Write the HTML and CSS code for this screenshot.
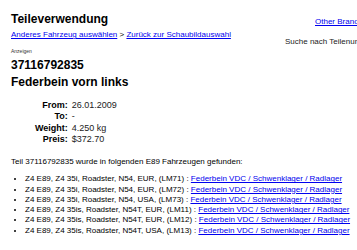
FILE: index.html
```html
<!DOCTYPE html>
<html lang="de">
<head>
    <meta charset="UTF-8" />
    <meta name="viewport" content="width=device-width, initial-scale=1.0" />
    <title>Teileverwendung - 37116792835</title>
    <link rel="stylesheet" href="styles.css">
</head>
<body>
    <div class="page">
        <div class="top">
            <div class="head">
                <h1 class="title">Teileverwendung</h1>
                <div class="crumbs">
                    <a href="#">Anderes Fahrzeug auswählen</a> &gt; <a href="#">Zurück zur Schaubildauswahl</a>
                </div>
                <div class="ad-label">Anzeigen</div>
            </div>
            <div class="side">
                <a href="#" class="brands">Other Brands</a>
                <div class="search-label">Suche nach Teilenummer</div>
            </div>
        </div>
        <div class="part-no">37116792835</div>
        <div class="part-name">Federbein vorn links</div>
        <table class="info">
            <tr><th>From:</th><td>26.01.2009</td></tr>
            <tr><th>To:</th><td>-</td></tr>
            <tr><th>Weight:</th><td>4.250 kg</td></tr>
            <tr><th>Preis:</th><td>$372.70</td></tr>
        </table>
        <p class="found">Teil 37116792835 wurde in folgenden E89 Fahrzeugen gefunden:</p>
        <ul class="vehicles">
            <li>Z4 E89, Z4 35i, Roadster, N54, EUR, (LM71) : <a href="#">Federbein VDC / Schwenklager / Radlager</a></li>
            <li>Z4 E89, Z4 35i, Roadster, N54, EUR, (LM72) : <a href="#">Federbein VDC / Schwenklager / Radlager</a></li>
            <li>Z4 E89, Z4 35i, Roadster, N54, USA, (LM73) : <a href="#">Federbein VDC / Schwenklager / Radlager</a></li>
            <li>Z4 E89, Z4 35is, Roadster, N54T, EUR, (LM11) : <a href="#">Federbein VDC / Schwenklager / Radlager</a></li>
            <li>Z4 E89, Z4 35is, Roadster, N54T, EUR, (LM12) : <a href="#">Federbein VDC / Schwenklager / Radlager</a></li>
            <li>Z4 E89, Z4 35is, Roadster, N54T, USA, (LM13) : <a href="#">Federbein VDC / Schwenklager / Radlager</a></li>
        </ul>
    </div>
</body>
</html>
```

FILE: styles.css
```css
/* Teileverwendung page */
html, body {
    overflow: hidden;
}
body {
    font-family: 'Liberation Sans', Arial, sans-serif;
    font-size: 8px;
    line-height: 10px;
    margin: 0;
    padding: 0;
    background-color: #ffffff;
    color: #000000;
}
a {
    color: #0000ee;
}
.page {
    padding: 12px 0 0 11px;
    width: 420px;
}
.top {
    display: flex;
    align-items: flex-start;
}
.head {
    flex: 0 0 274px;
}
.title {
    margin: 0;
    font-size: 12px;
    line-height: 14px;
    font-weight: bold;
}
.crumbs {
    margin-top: 4px;
}
.ad-label {
    margin-top: 7.5px;
    font-size: 5px;
    line-height: 6px;
    color: #333;
}
.side {
    padding-top: 5px;
}
.brands {
    display: block;
    padding-left: 30px;
}
.search-label {
    margin-top: 9.5px;
    white-space: nowrap;
    color: #222;
}
.part-no, .part-name {
    font-size: 12px;
    line-height: 14px;
    font-weight: bold;
}
.part-no { margin-top: 4px; }
.part-name { margin-top: 3.5px; }
.info {
    margin: 10.8px 0 0 24px;
    border-collapse: collapse;
    font-size: 9px;
    line-height: 11.5px;
}
.info th, .info td {
    padding: 0;
    vertical-align: baseline;
}
.info th {
    text-align: right;
    padding-right: 4px;
}
.info td {
    color: #222;
}
.found {
    margin: 11.6px 0 0 0;
}
.vehicles {
    margin: 6.9px 0 0 0;
    padding-left: 14px;
    line-height: 10.3px;
    white-space: nowrap;
}
```
